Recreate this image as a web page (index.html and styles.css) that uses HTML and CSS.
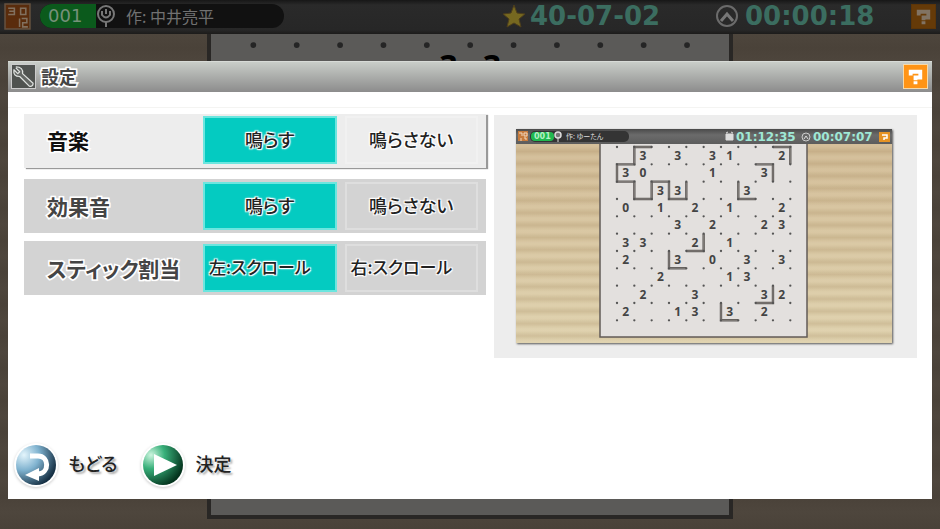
FILE: index.html
```html
<!DOCTYPE html>
<html lang="ja">
<head>
    <meta charset="UTF-8">
    <meta name="viewport" content="width=device-width, initial-scale=1.0">
    <title>設定</title>
    <link rel="stylesheet" href="styles.css">
</head>
<body>
    <div class="game">
        <header class="game-bar">
            <svg class="logo" viewBox="0 0 26 26" aria-hidden="true">
                <rect x="1" y="1" width="24" height="24" fill="#5a2c0c" stroke="#65513f" stroke-width="1.5"/>
                <path d="M4 5h6v6H4M5 8h5M16 5h5v6h-5zM15 15v8M17 15h5v4h-4v4h5" fill="none" stroke="#81705f" stroke-width="1.5"/>
            </svg>
            <div class="puzzle-info">
                <span class="puzzle-number">001</span>
                <svg class="mark" viewBox="0 0 20 24" aria-hidden="true">
                    <circle cx="10" cy="10" r="8" fill="none" stroke="#777" stroke-width="2"/>
                    <path d="M6 7v4q4 5 8 0V7M10 5v5M10 18v5" fill="none" stroke="#777" stroke-width="2"/>
                </svg>
                <span class="author">作: 中井亮平</span>
            </div>
            <div class="counters">
                <svg class="star" viewBox="0 0 24 24" aria-hidden="true">
                    <path d="M12 1l3 8 8 1-6 5 2 8-7-4-7 4 2-8-6-5 8-1z" fill="#766820" stroke="#4d3e1b"/>
                </svg>
                <span class="counter date">40-07-02</span>
                <svg class="clock" viewBox="0 0 24 24" aria-hidden="true">
                    <circle cx="12" cy="12" r="10" fill="none" stroke="#6b6b6b" stroke-width="2"/>
                    <path d="M6 17l6-7 6 7" fill="none" stroke="#777" stroke-width="3"/>
                </svg>
                <span class="counter time">00:00:18</span>
            </div>
            <button class="help help-dim" type="button" aria-label="ヘルプ">
                <svg viewBox="0 0 24 24"><path d="M7 11V7h10v6h-5v3M12 17v3" fill="none" stroke="currentColor" stroke-width="4"/></svg>
            </button>
        </header>
        <svg class="board" id="gameBoard" viewBox="0 0 514 477" preserveAspectRatio="xMidYMin slice" aria-hidden="true"></svg>
    </div>

    <main class="dialog">
        <header class="dialog-bar">
            <svg class="wrench" viewBox="0 0 24 24" aria-hidden="true">
                <rect width="24" height="24" fill="#505350"/>
                <path d="M4 3l4 4-2 2-4-4q-1 7 6 7l10 10q4 1 4-3L11 9q1-7-7-7" fill="#646764" stroke="#dfe2df" stroke-width="1.3" stroke-linejoin="round"/>
            </svg>
            <h1>設定</h1>
            <button class="help" type="button" aria-label="ヘルプ">
                <svg viewBox="0 0 24 24"><path d="M7 11V7h10v6h-5v3M12 17v3" fill="none" stroke="currentColor" stroke-width="4"/></svg>
            </button>
        </header>

        <div class="content">
            <form class="settings">
                <div class="row row-active" role="radiogroup" aria-labelledby="musicName">
                    <span class="row-name" id="musicName">音楽</span>
                    <div class="options">
                        <input type="radio" name="music" id="musicOn" checked>
                        <label for="musicOn">鳴らす</label>
                        <input type="radio" name="music" id="musicOff">
                        <label for="musicOff">鳴らさない</label>
                    </div>
                </div>
                <div class="row" role="radiogroup" aria-labelledby="soundName">
                    <span class="row-name" id="soundName">効果音</span>
                    <div class="options">
                        <input type="radio" name="sound" id="soundOn" checked>
                        <label for="soundOn">鳴らす</label>
                        <input type="radio" name="sound" id="soundOff">
                        <label for="soundOff">鳴らさない</label>
                    </div>
                </div>
                <div class="row" role="radiogroup" aria-labelledby="stickName">
                    <span class="row-name" id="stickName">スティック割当</span>
                    <div class="options options-start">
                        <input type="radio" name="stick" id="stickLeft" checked>
                        <label for="stickLeft">左:スクロール</label>
                        <input type="radio" name="stick" id="stickRight">
                        <label for="stickRight">右:スクロール</label>
                    </div>
                </div>
            </form>

            <section class="preview" aria-label="プレビュー">
                <svg class="screen" viewBox="0 0 376 214">
                    <defs>
                        <linearGradient id="stripe" x2="0" y2="1">
                            <stop offset="0" stop-color="#7c5a2a" stop-opacity="0"/>
                            <stop offset=".5" stop-color="#7c5a2a" stop-opacity=".16"/>
                            <stop offset="1" stop-color="#7c5a2a" stop-opacity="0"/>
                        </linearGradient>
                        <pattern id="stripes" y="4" width="376" height="12.3" patternUnits="userSpaceOnUse">
                            <rect y="1" width="376" height="10" fill="url(#stripe)"/>
                        </pattern>
                        <linearGradient id="paper" x2="0" y2="1">
                            <stop offset="0" stop-color="#d3bd98"/>
                            <stop offset="1" stop-color="#e0d3b0"/>
                        </linearGradient>
                        <linearGradient id="bar" x2="0" y2="1">
                            <stop offset="0" stop-color="#4a4a4a"/>
                            <stop offset=".4" stop-color="#6b6b6b"/>
                            <stop offset="1" stop-color="#5c5c5c"/>
                        </linearGradient>
                    </defs>
                    <rect width="376" height="214" fill="url(#paper)"/>
                    <rect width="376" height="214" fill="url(#stripes)"/>
                    <rect x="84" y="12" width="207" height="196" fill="#e3e0de" stroke="#625b57" stroke-width="1.5"/>
                    <rect width="376" height="15" fill="url(#bar)"/>
                    <rect x="14" y="2" width="99" height="11" rx="5" fill="#343434"/>
                    <rect x="15" y="3" width="23" height="9" rx="4" fill="#20b84f"/>
                    <rect x="2" y="2" width="10" height="10" fill="#c77b3c"/>
                    <path d="M3 4h3v3M8 4h3v3H8zM5 9v3M8 9h2v2" fill="none" stroke="#f0d9c0"/>
                    <circle cx="42" cy="6" r="3" fill="#777" stroke="#ddd" stroke-width="1.5"/>
                    <path d="M42 9v4" stroke="#ddd"/>
                    <text class="mini-number" x="18" y="10">001</text>
                    <text class="mini-author" x="50" y="10">作: ゆーたん</text>
                    <path d="M210 5h7v6h-7zM210 4l2-1M217 4l-2-1" fill="#ddd" stroke="#ddd"/>
                    <text class="mini-counter" x="220" y="12">01:12:35</text>
                    <circle cx="290" cy="8" r="4" fill="none" stroke="#ccc"/>
                    <path d="M288 10l2-3 2 3" fill="none" stroke="#ddd"/>
                    <text class="mini-counter" x="297" y="12">00:07:07</text>
                    <rect x="363" y="3" width="11" height="10" fill="#e69324"/>
                    <path d="M366 6h5v3h-3v2" fill="none" stroke="#fff" stroke-width="1.5"/>
                    <g id="previewBoard" transform="translate(101 18)"></g>
                </svg>
            </section>
        </div>

        <footer class="actions">
            <button class="action" type="button">
                <svg viewBox="0 0 44 44" aria-hidden="true">
                    <defs>
                        <radialGradient id="blue" cx=".2" cy=".25" r=".85">
                            <stop offset="0" stop-color="#e4f5fc"/>
                            <stop offset=".45" stop-color="#7fb2cf"/>
                            <stop offset="1" stop-color="#163044"/>
                        </radialGradient>
                    </defs>
                    <circle cx="22" cy="22" r="20" fill="url(#blue)"/>
                    <path d="M16 13h8c11 0 12 17 0 18" fill="none" stroke="#fff" stroke-width="5"/>
                    <path d="M11 32l14-7v13z" fill="#fff"/>
                </svg>
                <span>もどる</span>
            </button>
            <button class="action" type="button">
                <svg viewBox="0 0 44 44" aria-hidden="true">
                    <defs>
                        <radialGradient id="green" cx=".2" cy=".25" r=".85">
                            <stop offset="0" stop-color="#cdf5df"/>
                            <stop offset=".4" stop-color="#38b07a"/>
                            <stop offset="1" stop-color="#04331d"/>
                        </radialGradient>
                    </defs>
                    <circle cx="22" cy="22" r="20" fill="url(#green)"/>
                    <path d="M13 11l23 11-23 11z" fill="#fff"/>
                </svg>
                <span>決定</span>
            </button>
        </footer>
    </main>

    <script>
        const SVG_NS = 'http://www.w3.org/2000/svg';

        function add(parent, name, attrs, text) {
            const node = document.createElementNS(SVG_NS, name);
            for (const key in attrs) node.setAttribute(key, attrs[key]);
            if (text) node.textContent = text;
            parent.appendChild(node);
        }

        // clues: one string per row, lines: corner points [col, row, col, row, ...]
        function drawBoard(parent, step, left, top, clues, lines) {
            lines.forEach(function(line) {
                const points = line.map((n, i) => n * step + (i % 2 ? top : left));
                add(parent, 'polyline', { points: points.join(' '), class: 'edge' });
                add(parent, 'polyline', { points: points.join(' '), class: 'edge-core' });
            });
            for (let row = 0; row <= 10; row++) {
                for (let col = 0; col <= 10; col++) {
                    add(parent, 'circle', { cx: left + col * step, cy: top + row * step, r: step / 15, class: 'dot' });
                }
            }
            clues.forEach(function(text, row) {
                [...text].forEach(function(clue, col) {
                    if (clue === '.') return;
                    add(parent, 'text', { x: left + (col + 0.5) * step, y: top + (row + 0.75) * step, class: 'clue' }, clue);
                });
            });
        }

        drawBoard(document.getElementById('previewBoard'), 17.33, 0, 0, [
            '.3.3.31..2',
            '30...1..3.',
            '..33...3..',
            '0.1.2.1..2',
            '...3.2..23',
            '33..2.1...',
            '2..3.0.3.3',
            '..2...13..',
            '.2..3...32',
            '2..13.3.2.'
        ], [
            [2, 0, 1, 0, 1, 1, 0, 1, 0, 2, 1, 2, 1, 3, 2, 3, 2, 2, 3, 2, 3, 3, 4, 3, 4, 2],
            [9, 0, 10, 0, 10, 1],
            [8, 1, 9, 1, 9, 2],
            [7, 2, 7, 3, 8, 3],
            [5, 5, 5, 6, 4, 6],
            [3, 6, 3, 7, 4, 7],
            [9, 8, 9, 9, 8, 9],
            [6, 9, 6, 10, 7, 10]
        ]);

        drawBoard(document.getElementById('gameBoard'), 43, 42, 11, ['....33....'], []);
    </script>
</body>
</html>
```
FILE: styles.css
```css
* {
    box-sizing: border-box;
}
body {
    margin: 0;
    font-family: "Noto Sans CJK JP", sans-serif;
    font-feature-settings: "palt";
    color: #222;
}
button {
    border: none;
    padding: 0;
    background: none;
    font: inherit;
    color: inherit;
    cursor: pointer;
}
svg {
    display: block;
}

/* game behind the dialog */
.game {
    display: flex;
    flex-direction: column;
    height: 100vh;
    padding-bottom: 10px;
    background: repeating-linear-gradient(#4e463d 0, #4a4239 16px, #4e463d 32px);
}
.game-bar {
    display: flex;
    align-items: center;
    height: 34px;
    padding: 0 4px 2px;
    background: linear-gradient(#171717, #2a2a2a 5px, #272727 30px, #1c1b1a);
}
.logo {
    width: 27px;
    height: 27px;
    margin-right: 9px;
}
.puzzle-info {
    display: flex;
    align-items: center;
    width: 244px;
    height: 24px;
    border-radius: 12px;
    background: #111;
    color: #717171;
    font-size: 16px;
    font-feature-settings: normal;
}
.puzzle-number {
    width: 56px;
    padding-left: 8px;
    border-radius: 12px 0 0 12px;
    background: #0b5a1c;
    color: #76917a;
    font: 18px/24px "DejaVu Sans", sans-serif;
}
.mark {
    width: 20px;
    height: 24px;
    margin-right: 10px;
}
.counters {
    display: flex;
    align-items: center;
    margin-left: auto;
}
.star {
    width: 24px;
    height: 24px;
    margin-right: 4px;
}
.clock {
    width: 24px;
    height: 24px;
    margin-right: 6px;
}
.counter {
    color: #3b6d60;
    font: bold 26px/30px "DejaVu Sans", sans-serif;
}
.date {
    width: 185px;
}
.time {
    width: 166px;
}
.help {
    width: 25px;
    height: 25px;
    border: 1px solid #f7d9a8;
    background: #ff9416;
    color: #fff;
}
.help-dim {
    border-color: #5c3508;
    background: #653a08;
    color: #817363;
}
.board {
    flex: 1;
    min-height: 0;
    width: 56%;
    margin-left: 22%;
    border: 4px solid #292725;
    border-top: none;
    background: #5b5a58;
}
.dot {
    fill: #252525;
}
.clue {
    fill: #000;
    font: bold 32px "Open Sans", sans-serif;
    text-anchor: middle;
}

/* dialog */
.dialog {
    position: absolute;
    inset: 61px 8px 30px;
    display: flex;
    flex-direction: column;
    background: #fff;
}
.dialog-bar {
    display: flex;
    align-items: center;
    height: 31px;
    padding: 0 4px 1px 3px;
    border-top: 1px solid #d8dbd7;
    background: linear-gradient(#c9cdc8, #8c8c8c);
}
.wrench {
    width: 25px;
    height: 25px;
    border: 1px solid #ccc;
}
h1 {
    margin: 0 auto 0 5px;
    padding-bottom: 2px;
    font-size: 18px;
    line-height: 24px;
    color: #444;
}
h1, .row-name, .options label {
    text-shadow: 0 0 3px #fff, 1px 1px 1px #fff, -1px -1px 1px #fff, 1px -1px 1px #fff, -1px 1px 1px #fff;
}
h1, .row-name {
    -webkit-text-stroke: 3px #fff;
    paint-order: stroke fill;
}
.content {
    display: grid;
    grid-template-columns: 462fr 423fr;
    gap: 8px;
    align-items: start;
    flex: 1;
    margin-top: 15px;
    padding: 6px 15px 0 16px;
    border-top: 1px solid #f4f4f2;
}
.settings {
    display: grid;
    gap: 8px;
}
.row {
    display: flex;
    align-items: center;
    height: 54px;
    padding: 0 8px 0 23px;
    background: #d3d3d3;
}
.row-active {
    margin-bottom: 3px;
    padding-bottom: 2px;
    background: #ededed;
    box-shadow: 2px 1px 1px #999;
}
.row-name {
    width: 156px;
    font-size: 21px;
    font-weight: bold;
    color: #444;
}
.row-active .row-name {
    color: #111;
}
.options {
    flex: 1;
    display: flex;
    gap: 8px;
}
.options input {
    position: absolute;
    opacity: 0;
}
.options label {
    flex: 1 1 0;
    padding-bottom: 2px;
    border: 2px solid #dedede;
    text-align: center;
    white-space: nowrap;
    font-size: 18px;
    font-weight: 500;
    line-height: 42px;
}
.options-start label {
    padding-left: 4px;
    text-align: left;
    font-size: 17px;
}
.row-active label {
    border-color: #f1f1f1;
}
.options input:checked + label {
    border-color: #6be6df;
    background: #04cbc1;
}
.preview {
    margin-top: 1px;
    padding: 14px 25px 15px 22px;
    background: #ededed;
}
.screen {
    width: 100%;
    box-shadow: 1px 1px 2px #555;
}
.screen .clue {
    fill: #444;
    font-size: 12px;
}
.screen .dot {
    fill: #555;
}
.edge {
    fill: none;
    stroke: #5f5b59;
    stroke-width: 2.4;
}
.edge-core {
    fill: none;
    stroke: #8f8a87;
    stroke-width: 0.8;
}
.mini-number {
    fill: #b5f0c5;
    font: bold 8px "DejaVu Sans", sans-serif;
}
.mini-author {
    fill: #ddd;
    font-size: 7px;
}
.mini-counter {
    fill: #9fe8d6;
    font: bold 12px "DejaVu Sans", sans-serif;
}

.actions {
    display: flex;
    gap: 24px;
    margin-bottom: 12px;
    padding-left: 6px;
}
.action {
    display: flex;
    align-items: center;
    gap: 10px;
    font-size: 18px;
    font-weight: 500;
    line-height: 22px;
    text-shadow: 2px 2px 2px #aaa;
}
.action span {
    padding-bottom: 4px;
}
.action svg {
    width: 44px;
    height: 44px;
    border-radius: 50%;
    box-shadow: 0 1px 3px #ccc;
}
```
